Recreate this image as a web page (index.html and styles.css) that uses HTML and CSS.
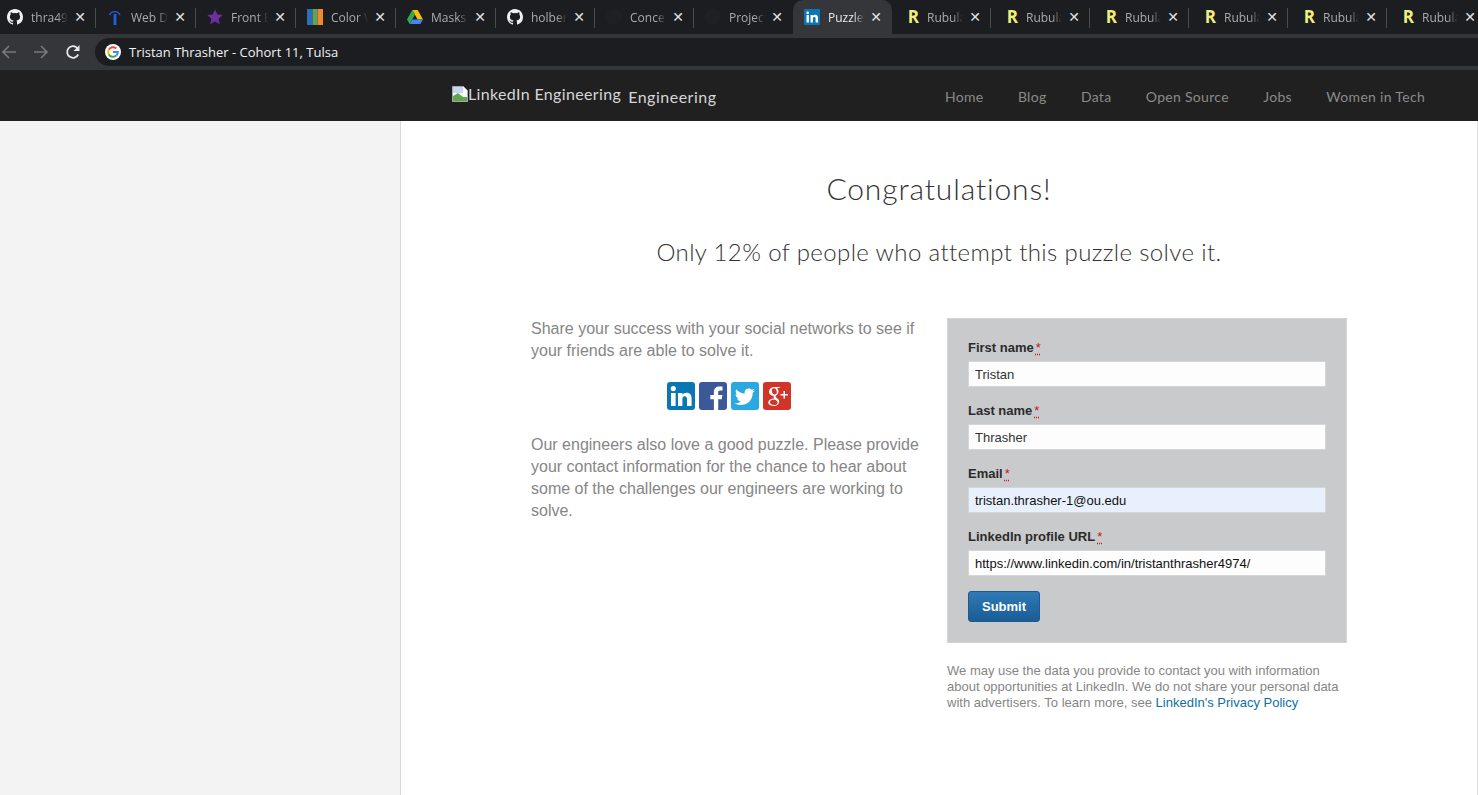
FILE: index.html
```html
<!DOCTYPE html>
<html lang="en">
<head>
    <meta charset="UTF-8">
    <title>Puzzle</title>
    <link rel="stylesheet" href="styles.css">
</head>
<body>
    <!-- Browser tabs -->
    <div class="tabs">
        <div class="tab sep"><svg class="fav" viewBox="0 0 16 16"><path fill="#f1f1f1" d="M8 0C3.58 0 0 3.58 0 8c0 3.54 2.29 6.53 5.47 7.59.4.07.55-.17.55-.38v-1.34c-2.23.48-2.69-1.08-2.69-1.08-.36-.92-.89-1.17-.89-1.17-.73-.5.05-.49.05-.49.8.06 1.23.83 1.23.83.71 1.22 1.87.87 2.33.66.07-.52.28-.87.5-1.07-1.78-.2-3.64-.89-3.64-3.95 0-.87.31-1.59.82-2.15-.08-.2-.36-1.02.08-2.12 0 0 .67-.21 2.2.82a7.6 7.6 0 0 1 4 0c1.53-1.04 2.2-.82 2.2-.82.44 1.1.16 1.92.08 2.12.51.56.82 1.27.82 2.15 0 3.07-1.87 3.75-3.65 3.95.29.25.54.73.54 1.48v2.2c0 .21.15.46.55.38A8 8 0 0 0 16 8c0-4.42-3.58-8-8-8z"/></svg><span class="tab-title">thra49</span><span class="tab-x">&#10005;</span></div>
        <div class="tab sep"><svg class="fav" viewBox="0 0 16 16"><path fill="none" stroke="#1f5fe0" stroke-width="1.4" d="M2.5 6C4.5 1.5 11 1.5 13 6"/><rect x="6.6" y="5" width="2.8" height="11" fill="#1f5fe0"/></svg><span class="tab-title">Web D</span><span class="tab-x">&#10005;</span></div>
        <div class="tab sep"><svg class="fav" viewBox="0 0 16 16"><path fill="#6b2fa0" d="M8 .5l2.3 5 5.4.6-4 3.7 1.1 5.4L8 12.4l-4.8 2.8 1.1-5.4-4-3.7 5.4-.6z"/></svg><span class="tab-title">Front E</span><span class="tab-x">&#10005;</span></div>
        <div class="tab sep"><svg class="fav" viewBox="0 0 16 16"><rect width="5.5" height="16" fill="#2c6fb8"/><rect x="5.5" width="5" height="16" fill="#58a55c"/><rect x="10.5" width="5.5" height="16" fill="#ee8a2c"/></svg><span class="tab-title">Color V</span><span class="tab-x">&#10005;</span></div>
        <div class="tab sep"><svg class="fav" viewBox="0 0 16 16"><path fill="#fbbc04" d="M5.3 1h5.4L16 10.5h-5.4z"/><path fill="#34a853" d="M5.3 1L0 10.5l2.7 4.5L8 5.5z"/><path fill="#4285f4" d="M2.7 15h10.6l2.7-4.5H5.3z"/></svg><span class="tab-title">Masks</span><span class="tab-x">&#10005;</span></div>
        <div class="tab sep"><svg class="fav" viewBox="0 0 16 16"><path fill="#f1f1f1" d="M8 0C3.58 0 0 3.58 0 8c0 3.54 2.29 6.53 5.47 7.59.4.07.55-.17.55-.38v-1.34c-2.23.48-2.69-1.08-2.69-1.08-.36-.92-.89-1.17-.89-1.17-.73-.5.05-.49.05-.49.8.06 1.23.83 1.23.83.71 1.22 1.87.87 2.33.66.07-.52.28-.87.5-1.07-1.78-.2-3.64-.89-3.64-3.95 0-.87.31-1.59.82-2.15-.08-.2-.36-1.02.08-2.12 0 0 .67-.21 2.2.82a7.6 7.6 0 0 1 4 0c1.53-1.04 2.2-.82 2.2-.82.44 1.1.16 1.92.08 2.12.51.56.82 1.27.82 2.15 0 3.07-1.87 3.75-3.65 3.95.29.25.54.73.54 1.48v2.2c0 .21.15.46.55.38A8 8 0 0 0 16 8c0-4.42-3.58-8-8-8z"/></svg><span class="tab-title">holber</span><span class="tab-x">&#10005;</span></div>
        <div class="tab sep"><span class="fav dark-fav"></span><span class="tab-title">Concep</span><span class="tab-x">&#10005;</span></div>
        <div class="tab"><span class="fav dark-fav"></span><span class="tab-title">Project</span><span class="tab-x">&#10005;</span></div>
        <div class="tab active"><svg class="fav" viewBox="0 0 16 16"><rect width="16" height="16" rx="1" fill="#0a76b4"/><rect x="2.5" y="6" width="2.4" height="7.5" fill="#fff"/><circle cx="3.7" cy="3.8" r="1.4" fill="#fff"/><path fill="#fff" d="M6.5 6h2.3v1.1c.5-.8 1.3-1.3 2.4-1.3 2 0 2.8 1.3 2.8 3.3v4.4h-2.4V9.6c0-1-.3-1.7-1.2-1.7-1 0-1.5.7-1.5 1.7v3.9H6.5z"/></svg><span class="tab-title">Puzzle</span><span class="tab-x">&#10005;</span></div>
        <div class="tab sep"><span class="fav r-fav">R</span><span class="tab-title">Rubula</span><span class="tab-x">&#10005;</span></div>
        <div class="tab sep"><span class="fav r-fav">R</span><span class="tab-title">Rubula</span><span class="tab-x">&#10005;</span></div>
        <div class="tab sep"><span class="fav r-fav">R</span><span class="tab-title">Rubula</span><span class="tab-x">&#10005;</span></div>
        <div class="tab sep"><span class="fav r-fav">R</span><span class="tab-title">Rubula</span><span class="tab-x">&#10005;</span></div>
        <div class="tab sep"><span class="fav r-fav">R</span><span class="tab-title">Rubula</span><span class="tab-x">&#10005;</span></div>
        <div class="tab"><span class="fav r-fav">R</span><span class="tab-title">Rubula</span><span class="tab-x">&#10005;</span></div>
    </div>

    <!-- Address bar -->
    <div class="toolbar">
        <svg class="nav-icon" viewBox="0 0 16 16"><path fill="none" stroke="#77787b" stroke-width="1.7" d="M15 8H2M8 2L2 8l6 6"/></svg>
        <svg class="nav-icon" viewBox="0 0 16 16"><path fill="none" stroke="#77787b" stroke-width="1.7" d="M1 8h13M8 2l6 6-6 6"/></svg>
        <svg class="nav-icon reload" viewBox="0 0 16 16"><path fill="none" stroke="#e8eaed" stroke-width="1.8" d="M13.2 10.5A5.8 5.8 0 1 1 12.2 4"/><path fill="#e8eaed" d="M14.5 1v6h-6z"/></svg>
        <div class="omnibox">
            <svg class="g-icon" viewBox="0 0 16 16"><circle cx="8" cy="8" r="8" fill="#fff"/><path fill="none" stroke="#ea4335" stroke-width="2" d="M3.9 5.6A4.8 4.8 0 0 1 11.3 4.5"/><path fill="none" stroke="#fbbc05" stroke-width="2" d="M3.9 5.6a4.8 4.8 0 0 0 0 4.8"/><path fill="none" stroke="#34a853" stroke-width="2" d="M3.9 10.4a4.8 4.8 0 0 0 7.6 1"/><path fill="none" stroke="#4285f4" stroke-width="2" d="M11.5 11.4A4.8 4.8 0 0 0 12.8 8H8"/></svg>
            <span>Tristan Thrasher - Cohort 11, Tulsa</span>
        </div>
    </div>

    <!-- Site header -->
    <header class="site-header">
        <div class="brand">
            <span class="broken-img">
                <svg viewBox="0 0 16 16"><path fill="#fff" stroke="#a8a8a8" d="M.5.5h11l4 4v11H.5z"/><path fill="#c5d6f3" d="M1 1h10v6H1z"/><path fill="#5fa84a" d="M1 15V10l5-3 5 4 4 0v4z"/></svg>LinkedIn Engineering
            </span>
            <span class="brand-name">Engineering</span>
        </div>
        <nav class="site-nav">
            <a>Home</a>
            <a>Blog</a>
            <a>Data</a>
            <a>Open Source</a>
            <a>Jobs</a>
            <a>Women in Tech</a>
        </nav>
    </header>

    <div class="page">
        <aside class="sidebar"></aside>
        <main class="content">
            <h1>Congratulations!</h1>
            <h2>Only 12% of people who attempt this puzzle solve it.</h2>

            <div class="columns">
                <div class="left-col">
                    <p>Share your success with your social networks to see if your friends are able to solve it.</p>
                    <div class="social">
                        <svg viewBox="0 0 28 28"><rect width="28" height="28" rx="3" fill="#0a76b4"/><rect x="4" y="11" width="4.6" height="13" fill="#fff"/><circle cx="6.3" cy="6.6" r="2.6" fill="#fff"/><path fill="#fff" d="M11 11h4.4v1.9c.8-1.3 2.2-2.2 4.2-2.2 3.5 0 5 2.2 5 5.8V24H20v-6.8c0-1.9-.7-3-2.2-3-1.7 0-2.4 1.2-2.4 3V24H11z"/></svg>
                        <svg viewBox="0 0 28 28"><rect width="28" height="28" rx="3" fill="#3b5998"/><path fill="#fff" d="M19.2 28V17.2h3.6l.6-4.2h-4.2v-2.6c0-1.2.4-2 2.1-2h2.2V4.6c-.4 0-1.7-.2-3.2-.2-3.2 0-5.4 2-5.4 5.5V13h-3.6v4.2h3.6V28z"/></svg>
                        <svg viewBox="0 0 28 28"><rect width="28" height="28" rx="3" fill="#2aa9e0"/><path fill="#fff" d="M24 8.4c-.8.4-1.6.6-2.4.7.9-.5 1.5-1.3 1.8-2.3-.8.5-1.7.8-2.6 1-1.6-1.7-4.2-1.8-5.9-.2-1.1 1-1.5 2.5-1.2 4-3.3-.2-6.4-1.7-8.5-4.3-1.1 1.9-.5 4.3 1.3 5.5-.7 0-1.3-.2-1.9-.5 0 2 1.4 3.7 3.3 4.1-.6.2-1.2.2-1.9.1.5 1.7 2.1 2.8 3.9 2.9-1.8 1.4-4.1 2-6.3 1.8 5.8 3.7 14.3 1.7 17.2-5.4.7-1.6 1-3.3.9-5 .9-.6 1.7-1.4 2.3-2.4z"/></svg>
                        <svg viewBox="0 0 28 28"><rect width="28" height="28" rx="3" fill="#d0352a"/><path fill="#fff" d="M11.6 5c-3.4 0-5.6 2.2-5.6 4.8 0 2.3 1.8 4 4 4h.8c-.2.4-.3.8-.3 1.2 0 .6.3 1.1.7 1.6-3 .1-5.9 1.4-5.9 4 0 2.2 2.5 3.4 5.3 3.4 3.3 0 5.6-2.1 5.6-4.3 0-3.3-3.6-3.6-3.6-5.3 0-1.3 2.9-2 2.9-5 0-1.5-.8-2.7-1.8-3.4h2L17.8 5zm-.6 1.2c1.7 0 2.8 2 2.8 4 0 1.3-.7 2.3-2 2.3-1.8 0-3-2-3-4 0-1.3.8-2.3 2.2-2.3zm.2 11.3c2 .6 3.4 1.6 3.4 3 0 1.6-1.4 2.6-3.5 2.6-2.3 0-4.2-1.2-4.2-3 0-1.8 2.2-2.7 4.3-2.6z"/><path fill="#fff" d="M20.5 9h1.5v3h3v1.5h-3v3h-1.5v-3h-3V12h3z"/></svg>
                    </div>
                    <p>Our engineers also love a good puzzle. Please provide your contact information for the chance to hear about some of the challenges our engineers are working to solve.</p>
                </div>

                <div class="right-col">
                    <form class="lead-form">
                        <div class="field">
                            <label>First name<abbr>*</abbr></label>
                            <input type="text" value="Tristan">
                        </div>
                        <div class="field">
                            <label>Last name<abbr>*</abbr></label>
                            <input type="text" value="Thrasher">
                        </div>
                        <div class="field">
                            <label>Email<abbr>*</abbr></label>
                            <input class="autofilled" type="text" value="tristan.thrasher-1@ou.edu">
                        </div>
                        <div class="field">
                            <label>LinkedIn profile URL<abbr>*</abbr></label>
                            <input class="autofilled-plain" type="text" value="https://www.linkedin.com/in/tristanthrasher4974/">
                        </div>
                        <button type="button">Submit</button>
                    </form>
                    <p class="disclaimer">We may use the data you provide to contact you with information about opportunities at LinkedIn. We do not share your personal data with advertisers. To learn more, see <a>LinkedIn's Privacy Policy</a></p>
                </div>
            </div>
        </main>
    </div>
</body>
</html>
```

FILE: styles.css
```css
/* General */
html, body {
    height: 100%;
}

body {
    margin: 0;
    display: flex;
    flex-direction: column;
    overflow: hidden;
    background-color: #fff;
    font-family: "Liberation Sans", Arial, sans-serif;
}

/* Browser tabs */
.tabs {
    display: flex;
    height: 34px;
    flex-shrink: 0;
    margin-left: -4px;
    background-color: #1c1d20;
}

.tab {
    width: 99px;
    flex-shrink: 0;
    box-sizing: border-box;
    display: flex;
    align-items: center;
    padding: 0 10px 0 11px;
    position: relative;
    color: #a9abae;
    font-family: "Open Sans", sans-serif;
    font-size: 12px;
}

.tab:nth-child(-n+5) {
    width: 100px;
}

.tab:last-child {
    width: 96px;
    padding-right: 7px;
}

.tab.sep::after {
    content: "";
    position: absolute;
    right: 0;
    top: 8px;
    height: 20px;
    width: 1px;
    background-color: #4a4b4e;
}

.tab.active {
    background-color: #35363a;
    border-radius: 10px 10px 0 0;
    color: #e8eaed;
}

.fav {
    width: 16px;
    height: 16px;
    flex-shrink: 0;
    margin-right: 8px;
}

.dark-fav {
    border-radius: 50%;
    background-color: #1f2023;
}

.r-fav {
    color: #f0ee7c;
    font-family: "Open Sans", sans-serif;
    font-weight: 700;
    font-size: 17px;
    line-height: 16px;
    text-align: right;
}

.tab-title {
    flex: 1;
    min-width: 0;
    overflow: hidden;
    white-space: nowrap;
    -webkit-mask-image: linear-gradient(to right, #000 72%, transparent 100%);
    mask-image: linear-gradient(to right, #000 72%, transparent 100%);
}

.tab-x {
    width: 12px;
    flex-shrink: 0;
    margin-left: 6px;
    text-align: center;
    color: #e0e1e3;
    font-family: "DejaVu Sans", sans-serif;
    font-size: 14px;
    font-weight: 700;
}

/* Address bar */
.toolbar {
    height: 36px;
    flex-shrink: 0;
    display: flex;
    align-items: center;
    gap: 16px;
    padding-left: 1px;
    background-color: #35363a;
}

.nav-icon {
    width: 16px;
    height: 16px;
    flex-shrink: 0;
}

.omnibox {
    flex: 1;
    height: 28px;
    margin-left: -2px;
    display: flex;
    align-items: center;
    gap: 8px;
    padding-left: 10px;
    border-radius: 14px 0 0 14px;
    background-color: #1c1d20;
    color: #f1f3f4;
    font-family: "Open Sans", sans-serif;
    font-size: 13px;
}

.g-icon {
    width: 16px;
    height: 16px;
}

/* Site header */
.site-header {
    height: 51px;
    flex-shrink: 0;
    display: flex;
    align-items: center;
    justify-content: space-between;
    padding: 0 53px 0 452px;
    background-color: #202020;
    font-family: "Lato", sans-serif;
}

.brand {
    display: flex;
    align-items: center;
    gap: 7px;
    color: #d6d6d6;
    font-size: 16px;
    letter-spacing: 0.35px;
}

.broken-img {
    display: flex;
    align-items: center;
    margin-top: -4px;
}

.broken-img svg {
    width: 16px;
    height: 16px;
}

.brand-name {
    font-size: 16px;
    letter-spacing: 0.5px;
    padding-top: 2px;
}

.site-nav {
    display: flex;
    gap: 34.4px;
    padding-top: 2px;
}

.site-nav a {
    color: #8a8a8a;
    font-size: 14px;
    letter-spacing: 0.3px;
}

/* Page */
.page {
    flex: 1;
    display: flex;
    min-height: 0;
}

.sidebar {
    width: 400px;
    flex-shrink: 0;
    background-color: #f3f3f3;
    border-right: 1px solid #d8d8d8;
}

.content {
    flex: 1;
    padding-top: 49px;
    border-right: 1px solid #e2e2e2;
    color: #333;
    font-family: "Lato", sans-serif;
}

h1 {
    margin: 0;
    text-align: center;
    font-size: 30px;
    line-height: 36px;
    font-weight: 300;
    letter-spacing: 0.85px;
}

h2 {
    margin: 31px 0 0;
    text-align: center;
    font-size: 24px;
    line-height: 30px;
    font-weight: 300;
    letter-spacing: 0.38px;
}

.columns {
    display: flex;
    margin-top: 51px;
    padding-left: 130px;
}

.left-col {
    width: 390px;
    margin-right: 26px;
    color: #868686;
    font-family: "Liberation Sans", Arial, sans-serif;
    font-size: 16px;
    line-height: 22px;
}

.left-col p {
    margin: 0;
}

.social {
    display: flex;
    justify-content: center;
    gap: 4px;
    margin: 20px 0 24px;
    padding-left: 6px;
}

.social svg {
    width: 28px;
    height: 28px;
}

.right-col {
    width: 400px;
    font-family: "Liberation Sans", Arial, sans-serif;
}

.lead-form {
    box-sizing: border-box;
    height: 325px;
    padding: 22px 20px;
    background-color: #c9cacc;
    border: 1px solid #d4d5d7;
}

.field {
    margin-bottom: 17px;
}

label {
    display: block;
    height: 18px;
    margin-bottom: 2px;
    color: #2b2b2b;
    font-size: 13px;
    line-height: 14px;
    font-weight: 700;
}

abbr {
    margin-left: 2px;
    color: #d11124;
    font-weight: 400;
    text-decoration: underline dotted #d11124;
    text-underline-offset: 2px;
}

input {
    display: block;
    box-sizing: border-box;
    width: 358px;
    height: 26px;
    padding: 0 6px;
    border: 1px solid #d5d6d8;
    background-color: #fdfdfd;
    color: #333;
    font-family: "Liberation Sans", Arial, sans-serif;
    font-size: 13px;
}

input.autofilled {
    background-color: #e8f0fe;
    color: #111;
}

input.autofilled-plain {
    color: #111;
}

button {
    display: block;
    width: 72px;
    height: 31px;
    margin-top: -2px;
    border: 1px solid #1d5a8e;
    border-radius: 3px;
    background: linear-gradient(#2f7ab5, #1a5c96);
    color: #fff;
    font-family: "Liberation Sans", Arial, sans-serif;
    font-size: 13px;
    font-weight: 700;
}

.disclaimer {
    margin: 20px 0 0;
    color: #868686;
    font-size: 13px;
    line-height: 16px;
}

.disclaimer a {
    color: #0f6ea3;
}
```
